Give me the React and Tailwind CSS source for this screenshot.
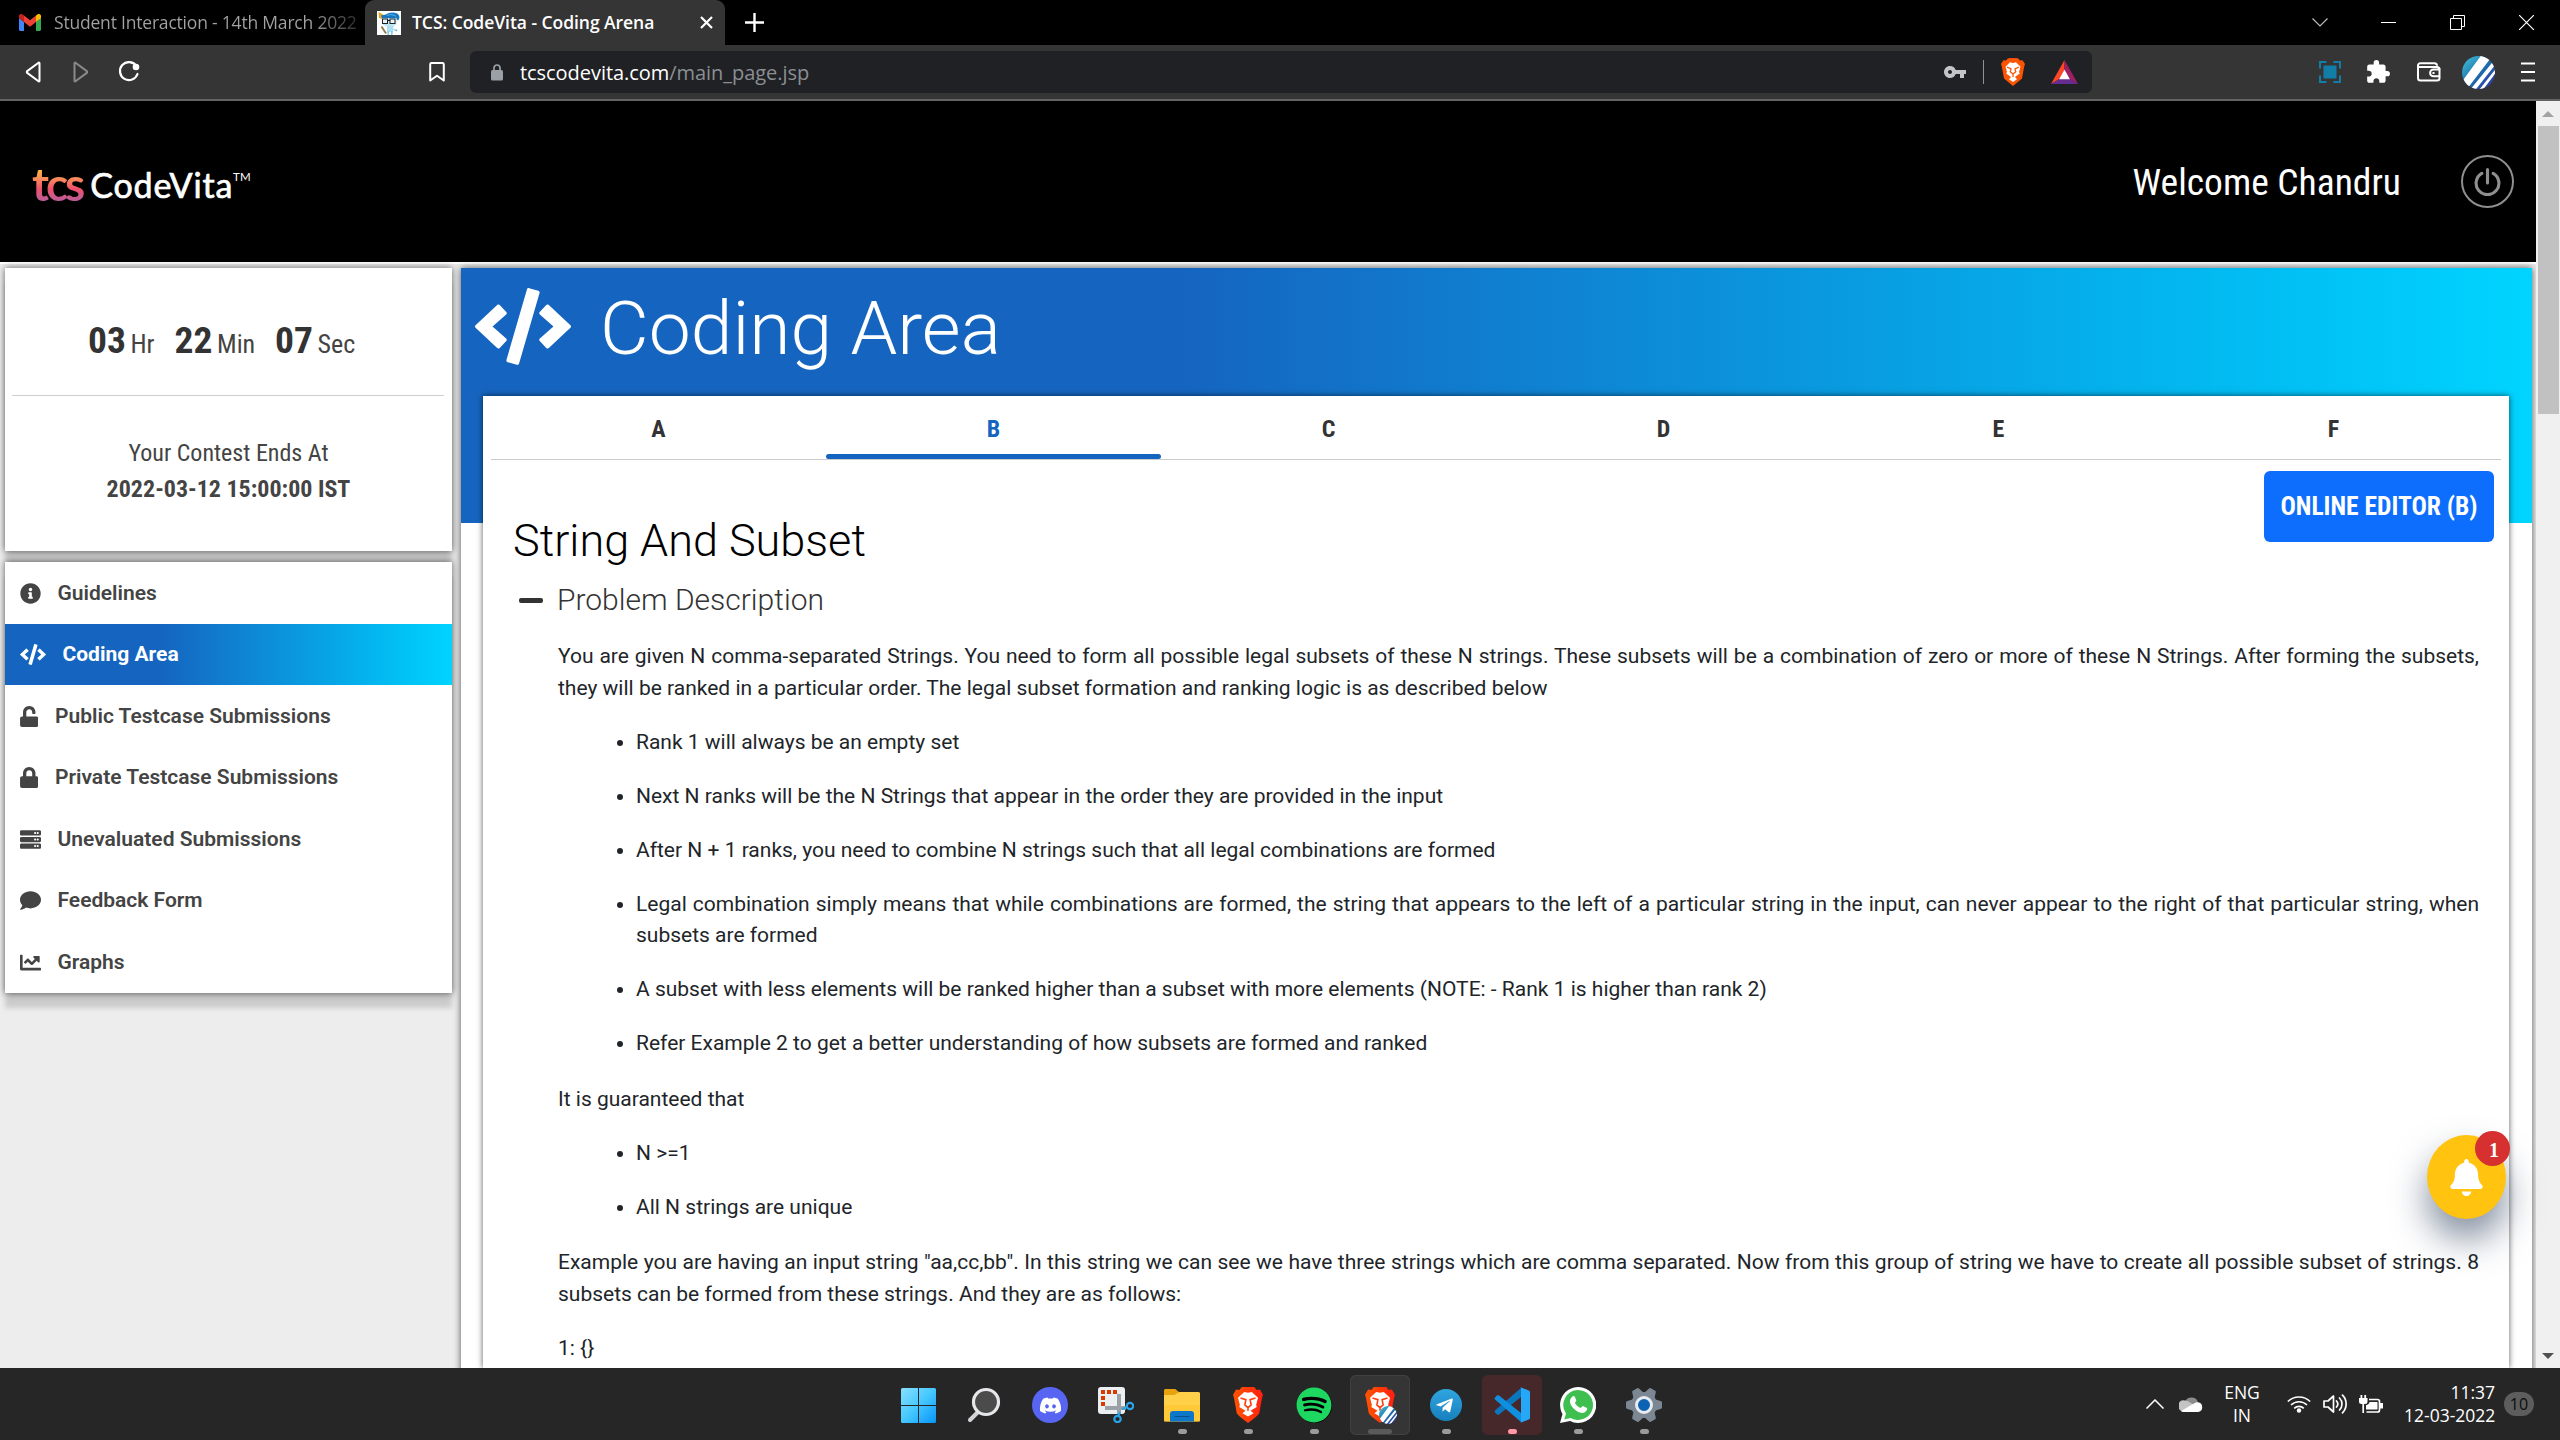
import React from 'react';
import { FaInfoCircle, FaCode, FaUnlock, FaLock, FaServer, FaComment, FaChartLine, FaBell, FaDiscord, FaTelegramPlane, FaSpotify } from 'react-icons/fa';
import { MdVpnKey, MdExtension } from 'react-icons/md';

/* ---------- browser chrome icons ---------- */

const GmailIcon = () => (
  <svg className="h-[17px] w-[22px]" viewBox="0 0 22 17">
    <path d="M0 3v12.5C0 16.3.7 17 1.500 17H5V8L0 4z" fill="#4285f4" />
    <path d="M22 3v12.500c0 .8-.7 1.500-1.500 1.500H17V8l5-4z" fill="#34a853" />
    <path d="M17 1.500V8l5-3.700V2.200c0-2-2.200-2.900-3.600-1.700z" fill="#fbbc04" />
    <path d="M5 8V1.500l6 4.700 6-4.700V8l-6 4.700z" fill="#ea4335" />
    <path d="M0 2.200v2.100L5 8V1.500L3.600.5C2.200-.7 0 .2 0 2.200z" fill="#c5221f" />
  </svg>
);

const MascotIcon = () => (
  <svg className="size-6" viewBox="0 0 24 24">
    <rect width="24" height="24" fill="#fff" />
    <path d="M1.500 1 6 3.500 9 6 5 8 2 7z" fill="#e0a92e" />
    <path d="M5 7 4 4.500l5-1C12 1 20 .5 22 4.500c1 2 0 4-1 5L18 7z" fill="#1577c2" />
    <path d="M10 4.500c3-1.500 7-1 9 1" fill="none" stroke="#5cb4e6" />
    <path d="M5.500 7h14v5c0 2-2.500 3.500-7 3.500S5.500 14 5.500 12z" fill="#bfe7f4" />
    <path d="M10 15h6.500l-.5 6h-6z" fill="#a9e0f2" />
    <path d="M10 20h2v4h-1.500zM14 20h2l-.5 4H14z" fill="#8ccde8" />
    <rect x="5.500" y="8" width="5" height="4.500" fill="#e4f4fa" stroke="#222" />
    <rect x="13" y="8" width="5" height="4.500" fill="#e4f4fa" stroke="#222" />
    <path d="M10.500 9.500H13" stroke="#222" />
    <path d="m4.500 15.500 4.500 7" stroke="#8a7a4a" strokeWidth="1.800" />
    <path d="M16.500 18.500 20 20l-1-2" fill="none" stroke="#69bfe0" />
  </svg>
);

const BackIcon = ({ flip }) => (
  <svg className={flip ? 'size-6 -scale-x-100' : 'size-6'} viewBox="0 0 24 24" fill="none" stroke={flip ? '#8a8a8a' : '#fff'} strokeWidth="2" strokeLinejoin="round">
    <path d="M18.500 3.200v17.600a.6.6 0 0 1-1 .5L6.200 12.900a1.200 1.200 0 0 1 0-1.800L17.500 2.700a.6.6 0 0 1 1 .5z" />
  </svg>
);

const ReloadIcon = () => (
  <svg className="size-6" viewBox="0 0 24 24" fill="none">
    <path d="M19.200 5.700A9 9 0 1 0 20.500 14" stroke="#fff" strokeWidth="2.200" strokeLinecap="round" />
    <circle cx="19" cy="7" r="3.300" fill="#fff" />
  </svg>
);

const BookmarkIcon = () => (
  <svg className="h-5 w-4" viewBox="0 0 16 20" fill="none" stroke="#fff" strokeWidth="2">
    <path d="M1.200 2.500C1.200 1.700 1.800 1.100 2.500 1.100h11c.8 0 1.300.6 1.300 1.400v16L8 13.800l-6.800 4.700z" strokeLinejoin="round" />
  </svg>
);

const PadlockIcon = () => (
  <svg className="h-[17px] w-3" viewBox="0 0 12 17">
    <rect y="6" width="12" height="10.500" rx="1.500" fill="#9aa0a6" />
    <path d="M3 6.500V4a3 3 0 0 1 6 0v2.500" fill="none" stroke="#9aa0a6" strokeWidth="1.700" />
  </svg>
);

const BatIcon = () => (
  <svg className="h-6 w-[27px]" viewBox="0 0 27 24">
    <path d="M13.500 0 0 24l8.500-5 5-9z" fill="#ff4724" />
    <path d="M13.500 0 27 24l-8.500-5-5-9z" fill="#9e1f63" />
    <path d="M0 24h27l-8.500-5h-10z" fill="#662d91" />
    <path d="m13.500 9.500-5.400 9.700h10.800z" fill="#fff" />
  </svg>
);

const CaptureIcon = () => (
  <svg className="size-[22px]" viewBox="0 0 22 22" fill="none" stroke="#127ea8" strokeWidth="2">
    <path d="M1 7.500V1h6.500M14.500 1H21v6.500M21 14.500V21h-6.500M7.500 21H1v-6.500" />
    <rect x="4.500" y="4.500" width="13" height="13" fill="#127ea8" stroke="none" />
  </svg>
);

const WalletIcon = () => (
  <svg className="h-5 w-6" viewBox="0 0 24 20" fill="none" stroke="#fff" strokeWidth="2">
    <path d="M22.500 6.500V16a2.500 2.500 0 0 1-2.500 2.500H3.500A2.500 2.500 0 0 1 1 16V3.500A2.300 2.300 0 0 1 3.300 1.200H17.500A2.500 2.500 0 0 1 20 3.700" />
    <path d="M1.500 5H20a2.500 2.500 0 0 1 2.500 2.500M22.500 7.500h-6a3.300 3.300 0 1 0 0 6.800h6M15.500 10.900h2" />
  </svg>
);

const AvatarIcon = ({ className, id }) => (
  <svg className={className} viewBox="0 0 34 34">
    <defs>
      <linearGradient id={id} x1="0" y1="0" x2="1" y2="1">
        <stop offset="0" stopColor="#47c6d8" />
        <stop offset=".5" stopColor="#1a6fae" />
        <stop offset="1" stopColor="#3a2fa0" />
      </linearGradient>
      <clipPath id={`${id}-c`}><circle cx="17" cy="17" r="17" /></clipPath>
    </defs>
    <g clipPath={`url(#${id}-c)`}>
      <rect width="34" height="34" fill={`url(#${id})`} />
      <path d="M-2 29 20-1h12L6 33zM9 34 31 7l2.500 3L13 36zM16 37 35 13v4L20 37z" fill="#fff" />
    </g>
  </svg>
);

const navBtn = 'flex w-12 items-center justify-center';
const winBtn = 'flex w-[69px] items-center justify-center';

function TabStrip() {
  return (
    <div className="flex h-[45px] shrink-0 bg-black font-['Open_Sans'] text-[17.5px]">
      <div className="flex w-[365px] items-center pl-[19px]">
        <GmailIcon />
        <span className="ml-[13px] bg-linear-to-r from-[#a3a3a3] from-85% to-[#303030] bg-clip-text tracking-[-0.200px] whitespace-nowrap text-transparent">
          Student Interaction - 14th March 2022
        </span>
      </div>
      <div className="flex w-[360px] items-center rounded-t-[9px] bg-[#353535] pl-3">
        <MascotIcon />
        <span className="ml-[11px] tracking-[-0.050px] whitespace-nowrap font-semibold text-white">TCS: CodeVita - Coding Arena</span>
        <svg className="mr-[12px] ml-auto size-[13px]" viewBox="0 0 13 13" stroke="#fff" strokeWidth="2.200"><path d="m1 1 11 11M12 1 1 12" /></svg>
      </div>
      <div className="flex w-[59px] items-center justify-center">
        <svg className="size-[19px]" viewBox="0 0 19 19" stroke="#fff" strokeWidth="2.400"><path d="M9.500 0v19M0 9.500h19" /></svg>
      </div>
      <div className="-mr-px ml-auto flex">
        <div className={winBtn}><svg className="h-[9px] w-4" viewBox="0 0 16 9" fill="none" stroke="#bbb" strokeWidth="1.200"><path d="m.5.5 7.500 7.500L15.500.5" /></svg></div>
        <div className={winBtn}><div className="h-px w-[15px] bg-white" /></div>
        <div className={winBtn}><svg className="size-[15px]" viewBox="0 0 15 15" fill="none" stroke="#fff"><path d="M.5 3.500h11v11H.5zM3.500 3.500v-3h11v11h-3" /></svg></div>
        <div className={winBtn}><svg className="size-[15px]" viewBox="0 0 15 15" stroke="#fff" strokeWidth="1.200"><path d="m0 0 15 15M15 0 0 15" /></svg></div>
      </div>
    </div>
  );
}

function Toolbar() {
  return (
    <div className="flex h-14 shrink-0 items-center border-b-2 border-[#636363] bg-[#353535] pl-[9px]">
      <div className={navBtn}><BackIcon /></div>
      <div className={navBtn}><BackIcon flip /></div>
      <div className={navBtn}><ReloadIcon /></div>
      <div className="mr-[9px] ml-[260px] flex w-12 items-center justify-center"><BookmarkIcon /></div>
      <div className="flex h-[42px] w-[1622px] items-center rounded-md bg-[#202124] pr-[14px] pl-[21px]">
        <PadlockIcon />
        <span className="ml-[17px] pt-px font-['Open_Sans'] text-[20px] tracking-[-0.050px] text-[#8b8f94]"><span className="text-white">tcscodevita.com</span>/main_page.jsp</span>
        <MdVpnKey className="ml-auto size-6 text-[#c3c5c8]" />
        <div className="ml-[16px] h-6 w-px bg-[#8f9194]" />
        <svg className="ml-[17px] h-7 w-6" viewBox="0 0 24 28">
          <path d="m12 0 5 .3 2 2.300 2.500-.4L24 6l-.8 2.500L21 20.500 12 28 3 20.500.8 8.500 0 6l2.500-3.800 2.500.4L7 .3z" fill="#fb5402" />
          <path d="m12 5 3-.7 4.500 4.500L18 14l.8 1.500L14 19l2 2.300-4 2.700-4-2.700L10 19l-4.800-3.500L6 14 4.500 8.800 9 4.300z" fill="#fff" />
          <path d="m6 9 4 1.800-.8 3L12 16l2.800-2.200-.8-3L18 9M12 16v3" fill="none" stroke="#fb5402" strokeWidth="1.300" />
        </svg>
        <div className="ml-[26px]"><BatIcon /></div>
      </div>
      <div className="mr-[7px] ml-auto flex *:flex *:w-[49.5px] *:items-center *:justify-center">
        <div><CaptureIcon /></div>
        <div><MdExtension className="mr-[3px] size-[26px] text-white" /></div>
        <div><WalletIcon /></div>
        <div><AvatarIcon className="size-[33px]" id="av1" /></div>
        <div><svg className="h-5 w-[14px]" viewBox="0 0 14 20" stroke="#fff" strokeWidth="2.200"><path d="M0 1.500h14M0 10h14M0 18.500h14" /></svg></div>
      </div>
    </div>
  );
}

/* ---------- page ---------- */

function PageHeader() {
  return (
    <header className="flex h-[161px] shrink-0 items-center bg-black pr-[22px] pl-8">
      <div className="flex items-end pt-1 font-['Lato'] leading-none">
        <span className="-mr-px bg-linear-to-b from-[#ffb83c] from-20% via-[#f0506a] via-60% to-[#9a5bb0] bg-clip-text pr-1 text-[46px] leading-[48px] font-bold tracking-[-3px] text-transparent">tcs</span>
        <span className="ml-[5px] text-[34px] leading-[46px] tracking-[0.800px] text-white [-webkit-text-stroke:0.7px_white]">CodeVita</span>
        <span className="mb-[25px] text-[11.5px] text-white">TM</span>
      </div>
      <span className="ml-auto pt-px font-['Roboto'] text-[37.5px] text-white [font-stretch:75%]">Welcome Chandru</span>
      <div className="ml-[60px] flex size-[53px] items-center justify-center rounded-full border-2 border-[#8f8f8f]">
        <svg className="h-[28px] w-[27px]" viewBox="0 0 26 27" fill="none" stroke="#8f8f8f" strokeWidth="3" strokeLinecap="round">
          <path d="M13 1.500v13M7.500 5.200a11 11 0 1 0 11 0" />
        </svg>
      </div>
    </header>
  );
}

const MENU = [
  [FaInfoCircle, 'Guidelines', 'w-[21px]'],
  [FaCode, 'Coding Area', 'w-[26px]'],
  [FaUnlock, 'Public Testcase Submissions', 'w-[18.5px]'],
  [FaLock, 'Private Testcase Submissions', 'w-[18.5px]'],
  [FaServer, 'Unevaluated Submissions', 'w-[21px]'],
  [FaComment, 'Feedback Form', 'w-[21px]'],
  [FaChartLine, 'Graphs', 'w-[21px]'],
];

const cardShadow = 'shadow-[0_0_7px_rgba(0,0,0,0.6),0_15px_5px_rgba(0,0,0,0.14)]';

function Sidebar() {
  return (
    <aside className="flex w-[447px] flex-col">
      <section className={`h-[283px] bg-white pt-[50px] text-[#444] ${cardShadow}`}>
        <div className="flex items-baseline pl-[83px] font-['Roboto'] text-[26px] leading-[45px] [font-stretch:75%]">
          <b className="w-[42.500px] text-[37.5px] text-[#333]">03</b><span className="w-[44px]">Hr</span>
          <b className="w-[42.500px] text-[37.5px] text-[#333]">22</b><span className="w-[58px]">Min</span>
          <b className="w-[42.500px] text-[37.5px] text-[#333]">07</b><span>Sec</span>
        </div>
        <div className="mt-[28px] ml-[7px] h-px w-[432px] bg-[#cfcfcf]" />
        <div className="mt-[39px] text-center font-['Roboto'] text-[24px] leading-[36px] [font-stretch:75%]">
          <div>Your Contest Ends At</div>
          <b>2022-03-12 15:00:00 IST</b>
        </div>
      </section>
      <nav className={`mt-[11px] bg-white ${cardShadow}`}>
        {MENU.map(([Icon, label, width], i) => (
          <div
            key={label}
            className={`flex h-[61.5px] items-center gap-[17px] pt-px pl-[14.5px] font-['Roboto'] text-[21px] ${
              i === 1 ? 'bg-linear-to-r from-[#1565c0] from-35% to-[#00d4ff] font-bold text-white' : 'font-semibold text-[#444]'
            }`}
          >
            <Icon className={`h-[21px] ${width}`} />
            {label}
          </div>
        ))}
      </nav>
    </aside>
  );
}

const RULES = [
  'Rank 1 will always be an empty set',
  'Next N ranks will be the N Strings that appear in the order they are provided in the input',
  'After N + 1 ranks, you need to combine N strings such that all legal combinations are formed',
  'Legal combination simply means that while combinations are formed, the string that appears to the left of a particular string in the input, can never appear to the right of that particular string, when subsets are formed',
  'A subset with less elements will be ranked higher than a subset with more elements (NOTE: - Rank 1 is higher than rank 2)',
  'Refer Example 2 to get a better understanding of how subsets are formed and ranked',
];

function Bullets({ items }) {
  return (
    <ul className="mt-[22.5px] mb-6 flex list-disc flex-col gap-[22.5px] pl-[78px]">
      {items.map((t) => <li key={t}>{t}</li>)}
    </ul>
  );
}

function Problem() {
  return (
    <article className="ml-[22px] h-[972px] w-[2026px] bg-white px-2 font-['Roboto'] shadow-[0_0_6px_rgba(0,0,0,0.65)]">
      <div className="flex h-16 border-b border-[#ccc]">
        {'ABCDEF'.split('').map((t) => (
          <div
            key={t}
            className={`flex flex-1 flex-col items-center justify-between pt-[19px] text-[24px] leading-[28px] font-bold [font-stretch:75%] ${
              t === 'B' ? 'text-[#1565c0]' : 'text-[#333]'
            }`}
          >
            {t}
            {t === 'B' && <div className="h-[5px] w-full rounded-[3px] bg-[#1565c0]" />}
          </div>
        ))}
      </div>
      <div className="flex h-[122px] items-start justify-between pr-[7px] pl-[22px]">
        <h1 className="pt-[54px] text-[45px] leading-[54px] font-light text-black">String And Subset</h1>
        <button className="mt-[11px] h-[71px] w-[230px] rounded-md bg-[#0d6efd] text-[25.5px] font-bold text-white [font-stretch:75%]">ONLINE EDITOR (B)</button>
      </div>
      <div className="flex items-center pl-[28px]">
        <div className="h-[5px] w-[24px] rounded-xs bg-[#333]" />
        <h2 className="ml-[14px] text-[30px] leading-[36px] font-light text-[#333]">Problem Description</h2>
      </div>
      <div className="mt-[23px] ml-[67px] w-[1921px] text-justify text-[21px] leading-[31.5px] text-[#212529]">
        <p>
          You are given N comma-separated Strings. You need to form all possible legal subsets of these N strings. These subsets will be a combination of zero or more of these N Strings. After forming the subsets, they will be ranked in a particular order. The legal subset formation and ranking logic is as described below
        </p>
        <Bullets items={RULES} />
        <p>It is guaranteed that</p>
        <Bullets items={['N >=1', 'All N strings are unique']} />
        <p>
          Example you are having an input string "aa,cc,bb". In this string we can see we have three strings which are comma separated. Now from this group of string we have to create all possible subset of strings. 8 subsets can be formed from these strings. And they are as follows:
        </p>
        <p className="mt-[22.500px]">1: {'{}'}</p>
      </div>
    </article>
  );
}

function NotificationBell() {
  return (
    <div className="absolute right-[54px] bottom-[149px] flex h-[84px] w-[79px] items-center justify-center rounded-[50%] bg-[#ffc310] shadow-[0_20px_36px_rgba(30,50,80,0.55)]">
      <FaBell className="h-[37px] w-[33px] text-white" />
      <div className="absolute -top-1 -right-1 flex size-[35px] items-center justify-center rounded-full bg-[#d63031] pt-[2px] pl-[3px] font-['Liberation_Serif'] text-[20px] font-bold text-white">1</div>
    </div>
  );
}

function Scrollbar() {
  return (
    <div className="flex w-6 shrink-0 flex-col items-center bg-[#f0f0f0]">
      <div className="mt-[10px] border-x-6 border-b-6 border-x-transparent border-b-[#a3a3a3]" />
      <div className="mt-[9px] h-[288px] w-[21px] bg-[#c1c1c1]" />
      <div className="mt-auto mb-[9px] border-x-6 border-t-6 border-x-transparent border-t-[#505050]" />
    </div>
  );
}

/* ---------- taskbar ---------- */

const WindowsIcon = () => (
  <svg className="size-[35px]" viewBox="0 0 35 35">
    <defs><linearGradient id="win" x1="0" y1="0" x2="35" y2="35" gradientUnits="userSpaceOnUse"><stop offset="0" stopColor="#88dfff" /><stop offset=".5" stopColor="#45c8ff" /><stop offset="1" stopColor="#0794fb" /></linearGradient></defs>
    <path d="M1.500 0H17v17H0V1.500A1.500 1.500 0 0 1 1.500 0zM18 0h15.500A1.500 1.500 0 0 1 35 1.500V17H18zM0 18h17v17H1.500A1.500 1.500 0 0 1 0 33.500zM18 18h17v15.500a1.500 1.500 0 0 1-1.500 1.500H18z" fill="url(#win)" />
  </svg>
);

const SearchIcon = () => (
  <svg className="size-9" viewBox="0 0 36 36">
    <path d="M12 25 4 33" stroke="#d3d4d8" strokeWidth="4" strokeLinecap="round" />
    <circle cx="20" cy="15" r="12.500" fill="#4b4b4b" stroke="#e6e7ea" strokeWidth="3.200" />
  </svg>
);

const SnipIcon = () => (
  <svg className="size-9" viewBox="0 0 36 36">
    <rect width="27" height="27" rx="3" fill="#eceff2" />
    <path d="M3 5h4M9 5h4M15 5h4M5 9v4M5 15v4" stroke="#d83b01" strokeWidth="4" />
    <path d="M21 7v20M7 21h21" stroke="#8d949b" strokeWidth="4" opacity=".85" />
    <circle cx="32" cy="19" r="3.200" fill="none" stroke="#2aa3e8" strokeWidth="2.200" />
    <circle cx="19.500" cy="32" r="3.200" fill="none" stroke="#2aa3e8" strokeWidth="2.200" />
    <path d="M20.500 28.500 22 25M28.500 20.500 24 22" stroke="#2aa3e8" strokeWidth="2" />
  </svg>
);

const FolderIcon = () => (
  <svg className="size-9" viewBox="0 0 36 36">
    <path d="M0 3.500C0 2.500.8 2 1.500 2h9.700L15 5h-.5v5H0z" fill="#e8a30c" />
    <path d="M0 8h10.500L15 5h19.500C35.500 5 36 5.800 36 6.500V33c0 1-.5 1.500-1.500 1.500h-33C.5 34.500 0 34 0 33z" fill="#ffd04a" />
    <path d="M0 18h36v15c0 1-.5 1.500-1.500 1.500h-33C.5 34.500 0 34 0 33z" fill="#ffc52c" opacity=".6" />
    <path d="M6 34.500V27a3 3 0 0 1 3-3h18a3 3 0 0 1 3 3v7.500z" fill="#0c77c9" />
    <path d="M10.500 29.500h15" stroke="#0a4f8c" />
  </svg>
);

const BraveTaskIcon = () => (
  <svg className="h-9 w-[30px]" viewBox="0 0 24 28" preserveAspectRatio="none">
    <defs><linearGradient id="brv"><stop offset="0" stopColor="#ff5500" /><stop offset="1" stopColor="#ff1f10" /></linearGradient></defs>
    <path d="m7 0h10l2 2.300 2.500-.4L24 6l-.8 2.500L21 20.500Q20 22.500 12 28 4 22.500 3 20.500L.8 8.500 0 6l2.500-4.100 2.500.4z" fill="url(#brv)" />
    <path d="m12 4.500 3-.7 5 4.500L18.500 14l.5 1.500-5 3 2.500 2L12 23l-4.500-2.500 2.500-2-5-3L5.500 14 4 8.300 9 3.800z" fill="#fff" />
    <path d="m6 8.500 4.300 1.300L9.500 14l2.500 2 2.500-2-.8-4.200L18 8.500M12 16v2.500" fill="none" stroke="#ff4010" strokeWidth="1.300" />
  </svg>
);

const DiscordIcon = () => (
  <div className="flex size-9 items-center justify-center rounded-full bg-[#5865f2]"><FaDiscord className="size-[23px] text-white" /></div>
);

const SpotifyIcon = () => (
  <div className="flex size-[35px] items-center justify-center rounded-full bg-black"><FaSpotify className="size-9 shrink-0 text-[#1ed760]" /></div>
);

const BraveProfileIcon = () => (
  <div className="relative"><BraveTaskIcon /><AvatarIcon className="absolute -right-[2px] -bottom-px size-[18px]" id="av2" /></div>
);

const TelegramIcon = () => (
  <div className="flex size-8 items-center justify-center rounded-full bg-linear-to-b from-[#2fa5e0] to-[#1680bd]"><FaTelegramPlane className="mr-[3px] size-[19px] text-white" /></div>
);

const VsCodeIcon = () => (
  <svg className="size-9" viewBox="0 0 36 36">
    <path d="M27 1 1 23.500q-1 1 0 2l2 2q1 .8 2 0L27 10z" fill="#0b76bd" />
    <path d="M27 35 1 12.500q-1-1 0-2l2-2q1-.8 2 0L27 26z" fill="#0f8fdd" />
    <path d="m26 0 8.700 3.500c.8.4 1.300 1 1.300 2v25c0 1-.5 1.600-1.300 2L26 36c.8-.3 1-.8 1-1.800V1.800c0-1-.2-1.500-1-1.800z" fill="#27a7f7" />
  </svg>
);

const WhatsAppIcon = () => (
  <svg className="size-9" viewBox="0 0 36 36">
    <path d="M18 0a18 18 0 1 1-8 34L0 36l2.500-9A18 18 0 0 1 18 0z" fill="#fff" />
    <path d="M18 3a15 15 0 1 1-7.500 28L4.300 32.500 6 26.500A15 15 0 0 1 18 3z" fill="#3ebf50" />
    <path d="M12.500 9.500c1-.7 2-.5 2.400.6l1.300 3c.3.7-.2 1.500-1.300 2.700.8 2 3 4.200 5.800 5.300 1.300-1.800 2-2.200 2.800-1.800l3 1.500c.8.5 1 1.200.2 2.500-1 2-3.500 3-5.700 2.500-5.500-1.300-10-6-11-10.300-.4-2.300.8-4.700 2.500-6z" fill="#fff" />
  </svg>
);

const GearIcon = () => (
  <svg className="size-9" viewBox="0 0 36 36">
    <g fill="#7c8794">
      <circle cx="18" cy="18" r="13" />
      {[30, 90, 150].map((a) => <path key={a} d="M14 1.500Q14.200 0 15.500 0h5Q21.800 0 22 1.500L24 8v20l-2 6.500q-.2 1.500-1.500 1.500h-5q-1.300 0-1.500-1.500L12 28V8z" transform={`rotate(${a} 18 18)`} />)}
    </g>
    <circle cx="18" cy="18" r="7.500" fill="#0c62b3" stroke="#e8ecf0" strokeWidth="3" />
  </svg>
);

const APPS = [
  { Icon: WindowsIcon }, { Icon: SearchIcon }, { Icon: DiscordIcon }, { Icon: SnipIcon },
  { Icon: FolderIcon, open: true }, { Icon: BraveTaskIcon, open: true }, { Icon: SpotifyIcon, open: true },
  { Icon: BraveProfileIcon, active: true }, { Icon: TelegramIcon, open: true },
  { Icon: VsCodeIcon, alert: true }, { Icon: WhatsAppIcon, open: true }, { Icon: GearIcon, open: true },
];

function Taskbar() {
  return (
    <footer className="relative flex h-[72px] shrink-0 items-center justify-end bg-[#262626] pr-[26px] font-['Open_Sans'] text-white">
      <div className="absolute top-[7px] left-[888px] flex gap-[6px]">
        {APPS.map(({ Icon, open, active, alert }, i) => (
          <div
            key={i}
            className={`flex h-[60px] w-[60px] flex-col items-center justify-end rounded-md pb-px ${active ? 'bg-[#353535] ring-1 ring-[#404040] ring-inset' : ''} ${alert ? 'bg-[#47282a]' : ''}`}
          >
            <div className="flex h-9 items-center"><Icon /></div>
            <div className={`mt-[6px] h-[5px] rounded-full ${open ? 'w-[9px] bg-[#9b9b9b]' : ''} ${active ? 'w-6 bg-[#5a5a5a]' : ''} ${alert ? 'w-[9px] bg-[#ff99a4]' : ''}`} />
          </div>
        ))}
      </div>
      <svg className="h-[10px] w-[18px]" viewBox="0 0 18 10" fill="none" stroke="#fff" strokeWidth="1.500"><path d="m.5 9.500 8.500-8.500 8.500 8.500" /></svg>
      <svg className="ml-[15px] h-4 w-6" viewBox="0 0 24 16">
        <path d="M6 6a7 7 0 0 1 13 0l-3 4z" fill="#8c8c8c" />
        <path d="M1 14a5.500 5.500 0 0 1 5-9.500c2 0 3.500 1 5 2L21 12l-3 4H5a5 5 0 0 1-4-2z" fill="#c4c4c4" />
        <path d="M2 15 15 7.500A6 6 0 0 1 19 6.300a4.900 4.900 0 0 1 0 9.700H5a5 5 0 0 1-3-1z" fill="#fff" />
      </svg>
      <div className="ml-[20px] w-[38px] text-center text-[17.5px] leading-[23px]">ENG<br />IN</div>
      <svg className="ml-[26px] h-[18px] w-6" viewBox="0 0 24 18" fill="none" stroke="#fff" strokeWidth="1.600">
        <path d="M.8 6.500a16 16 0 0 1 22.400 0M4 10a11.400 11.400 0 0 1 16 0M7.200 13.300a7 7 0 0 1 9.600 0" />
        <circle cx="12" cy="15.500" r="2.200" fill="#fff" stroke="none" />
      </svg>
      <svg className="ml-[12px] h-5 w-6" viewBox="0 0 24 20" fill="none" stroke="#fff" strokeWidth="1.700" strokeLinejoin="round">
        <path d="M1 7v6h4l5.500 5V2L5 7zM13.500 7a4.500 4.500 0 0 1 0 6M16.500 4a8.500 8.500 0 0 1 0 12M19.500 1.200a12.500 12.500 0 0 1 0 17.600" strokeLinecap="round" />
      </svg>
      <svg className="ml-[12px] h-[19px] w-6" viewBox="0 0 24 19" fill="none" stroke="#fff" strokeWidth="1.700">
        <path d="M10 4.500h8.500a2 2 0 0 1 2 2v8.500a2 2 0 0 1-2 2H7.500M4.200 9v9" />
        <path d="M10.500 7h8v7.500H7V10c2 0 3.500-1.500 3.500-3zM0 3h8.500v3.500A2.500 2.500 0 0 1 6 9H2.500A2.500 2.500 0 0 1 0 6.500zM21 8h3v5.500h-3zM1.500 0h1.800v3H1.500zM5.300 0h1.800v3H5.300z" fill="#fff" stroke="none" />
      </svg>
      <div className="ml-[21px] w-[91px] text-right text-[17.5px] leading-[23px] whitespace-nowrap">11:37<br />12-03-2022</div>
      <div className="ml-[9px] flex h-6 w-[30px] items-center justify-center rounded-full bg-[#5d5d5d] text-[16px] leading-none text-[#0c0c0c]">10</div>
    </footer>
  );
}

export default function App() {
  return (
    <div className="flex h-[1440px] w-[2560px] flex-col overflow-hidden bg-[#ededed]">
      <TabStrip />
      <Toolbar />
      <div className="relative flex h-[1267px] shrink-0 overflow-hidden">
        <div className="flex w-[2536px] shrink-0 flex-col overflow-hidden">
          <PageHeader />
          <div className="flex border-t-2 border-white pt-1 pl-[5px]">
            <Sidebar />
            <main className="ml-[9px] h-[1120px] w-[2071px] bg-white shadow-[0_0_7px_rgba(0,0,0,0.65)]">
              <div className="-mb-[127px] h-[255px] bg-linear-to-r from-[#1565c0] from-35% to-[#00d4ff] pl-[14px]">
                <div className="flex h-[128px] items-start pt-[16px]">
                  <FaCode className="mt-[4px] h-[77px] w-[96px] text-white" />
                  <span className="ml-[29px] font-['Roboto'] text-[75px] leading-[88px] font-light text-white">Coding Area</span>
                </div>
              </div>
              <Problem />
            </main>
          </div>
        </div>
        <Scrollbar />
        <NotificationBell />
      </div>
      <Taskbar />
    </div>
  );
}
